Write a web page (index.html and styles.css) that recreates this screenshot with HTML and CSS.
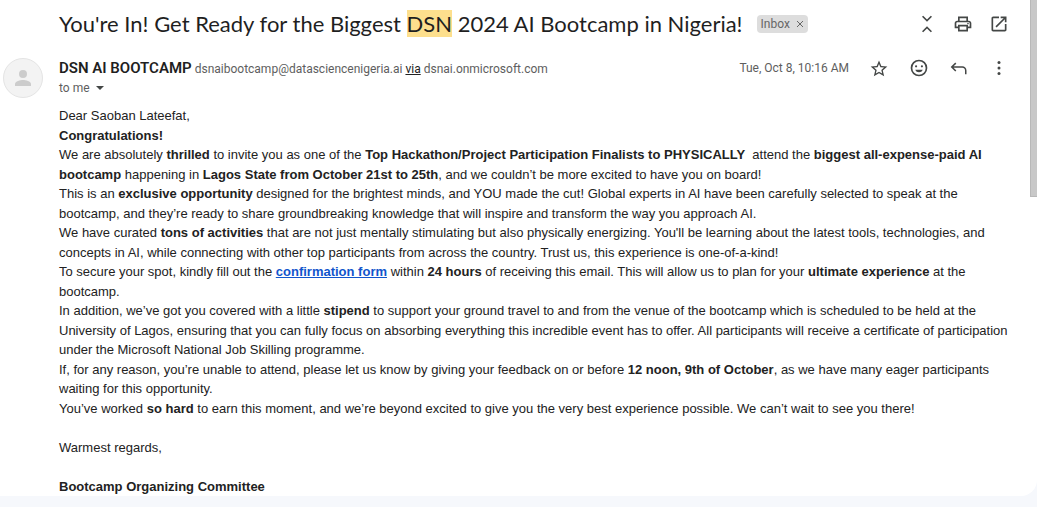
FILE: index.html
```html
<!DOCTYPE html>
<html lang="en">
<head>
  <meta charset="UTF-8">
  <meta name="viewport" content="width=device-width, initial-scale=1.0">
  <title>Mail</title>
  <link rel="stylesheet" href="styles.css">
</head>
<body>
  <main class="mail">
    <header class="subject">
      <h1 class="subject-text">You're In! Get Ready for the Biggest <mark>DSN</mark> 2024 AI Bootcamp in Nigeria!</h1>
      <div class="label">Inbox <button class="label-close" aria-label="Remove label"><svg viewBox="0 0 8 8"><path d="M1 1l6 6M7 1L1 7"/></svg></button></div>
      <div class="subject-actions">
        <button class="icon" aria-label="Collapse all"><svg viewBox="0 0 24 24"><path d="M6 20.600l1.400 1.400 4.600-4.600 4.600 4.600 1.400-1.400-6-6-6 6zM18 3.400l-1.400-1.400L12 6.600 7.400 2 6 3.400l6 6 6-6z"/></svg></button>
        <button class="icon" aria-label="Print"><svg viewBox="0 0 24 24"><path d="M19 8h-1V3H6v5H5c-1.660 0-3 1.340-3 3v6h4v4h12v-4h4v-6c0-1.660-1.340-3-3-3zM8 5h8v3H8V5zm8 14H8v-4h8v4zm2-4v-2H6v2H4v-4c0-.55.45-1 1-1h14c.55 0 1 .45 1 1v4h-2z"/><circle cx="18" cy="11.500" r="1"/></svg></button>
        <button class="icon" aria-label="Open in new window"><svg viewBox="0 0 24 24"><path d="M19 19H5V5h7V3H5c-1.110 0-2 .9-2 2v14c0 1.100.89 2 2 2h14c1.100 0 2-.9 2-2v-7h-2v7zM14 3v2h3.590l-9.830 9.830 1.410 1.410L19 6.410V10h2V3h-7z"/></svg></button>
      </div>
    </header>

    <section class="message">
      <div class="avatar">
        <svg viewBox="0 0 24 24"><circle cx="12" cy="8" r="4"/><path d="M12 14c-2.700 0-8 1.300-8 4v2h16v-2c0-2.700-5.300-4-8-4z"/></svg>
      </div>
      <div class="content">
        <div class="sender">
          <div class="from"><span class="name">DSN AI BOOTCAMP</span> dsnaibootcamp@datasciencenigeria.ai <a class="via" href="#">via</a> dsnai.onmicrosoft.com</div>
          <div class="date">Tue, Oct 8, 10:16 AM</div>
          <div class="message-actions">
            <button class="icon" aria-label="Star"><svg viewBox="0 0 24 24"><path d="M22 10.240l-7.190-.62L12 3 9.190 9.630 2 10.240l5.460 4.730L5.820 22 12 18.270 18.180 22l-1.630-7.030L22 10.240zM12 16.400l-3.760 2.270 1-4.280-3.320-2.880 4.380-.38L12 7.100l1.710 4.040 4.380.38-3.320 2.880 1 4.280L12 16.400z"/></svg></button>
            <button class="icon" aria-label="Add reaction"><svg viewBox="0 0 24 24"><path d="M12 2a10 10 0 1 0 0 20 10 10 0 0 0 0-20zm0 18a8 8 0 1 1 0-16 8 8 0 0 1 0 16zM7.500 14h9c-.7 2-2.400 3-4.500 3s-3.800-1-4.500-3z"/><circle cx="8.500" cy="10" r="1.300"/><circle cx="15.500" cy="10" r="1.300"/></svg></button>
            <button class="icon" aria-label="Reply"><svg viewBox="0 0 24 24"><path d="M7.500 5.500l1.300 1.300L5.500 10H16c2.800 0 5 2.200 5 5v4.500h-1.800V15c0-1.800-1.400-3.200-3.200-3.200H5.500l3.300 3.200-1.300 1.300L2 10.900 7.500 5.500z"/></svg></button>
            <button class="icon" aria-label="More"><svg viewBox="0 0 24 24"><circle cx="12" cy="5.500" r="1.800"/><circle cx="12" cy="12" r="1.800"/><circle cx="12" cy="18.500" r="1.800"/></svg></button>
          </div>
        </div>
        <div class="to">to me <button class="details" aria-label="Show details"></button></div>

        <div class="body">
          <p>Dear Saoban Lateefat,</p>
          <p><b>Congratulations!</b></p>
          <p>We are absolutely <b>thrilled</b> to invite you as one of the <b>Top Hackathon/Project Participation Finalists to PHYSICALLY&nbsp;</b> attend the <b>biggest all-expense-paid AI bootcamp</b> happening in <b>Lagos State from October 21st to 25th</b>, and we couldn’t be more excited to have you on board!</p>
          <p>This is an <b>exclusive opportunity</b> designed for the brightest minds, and YOU made the cut! Global experts in AI have been carefully selected to speak at the bootcamp, and they’re ready to share groundbreaking knowledge that will inspire and transform the way you approach AI.</p>
          <p>We have curated <b>tons of activities</b> that are not just mentally stimulating but also physically energizing. You'll be learning about the latest tools, technologies, and concepts in AI, while connecting with other top participants from across the country. Trust us, this experience is one-of-a-kind!</p>
          <p>To secure your spot, kindly fill out the <a class="form-link" href="#">confirmation form</a> within <b>24 hours</b> of receiving this email. This will allow us to plan for your <b>ultimate experience</b> at the bootcamp.</p>
          <p>In addition, we’ve got you covered with a little <b>stipend</b> to support your ground travel to and from the venue of the bootcamp which is scheduled to be held at the University of Lagos, ensuring that you can fully focus on absorbing everything this incredible event has to offer. All participants will receive a certificate of participation under the Microsoft National Job Skilling programme.</p>
          <p>If, for any reason, you’re unable to attend, please let us know by giving your feedback on or before <b>12 noon, 9th of October</b>, as we have many eager participants waiting for this opportunity.</p>
          <p>You’ve worked <b>so hard</b> to earn this moment, and we’re beyond excited to give you the very best experience possible. We can’t wait to see you there!</p>
          <br>
          <p>Warmest regards,</p>
          <br>
          <p><b>Bootcamp Organizing Committee</b></p>
        </div>
      </div>
    </section>
    <div class="scrollbar"></div>
  </main>
</body>
</html>
```
FILE: styles.css
```css
* {
  box-sizing: border-box;
}
body {
  margin: 0;
  background: #f6f8fc;
  color: #222;
  font-family: "Liberation Sans", Arial, sans-serif;
  font-size: 13px;
}
button {
  padding: 0;
  border: none;
  background: none;
  cursor: pointer;
}
svg {
  display: block;
}
.mail {
  position: relative;
  background: #fff;
  border-radius: 0 0 16px 0;
}

/* subject line */
.subject {
  display: flex;
  align-items: center;
  height: 48px;
  padding: 0 28px 0 59px;
}
.subject-text {
  margin: 0;
  padding-bottom: 2px;
  color: #1f1f1f;
  font-family: Lato, sans-serif;
  font-size: 22px;
  font-weight: 400;
  line-height: 27px;
  white-space: nowrap;
}
mark {
  display: inline-block;
  background: #fddf8d;
  color: inherit;
}
.label {
  display: flex;
  align-items: center;
  gap: 6px;
  height: 18px;
  margin-left: 14px;
  padding: 0 4px;
  border-radius: 4px;
  background: #ddd;
  color: #666;
  font-family: Roboto, sans-serif;
  font-size: 12px;
}
.label-close svg {
  width: 8px;
  height: 8px;
  fill: none;
  stroke: #666;
}
.subject-actions,
.message-actions {
  display: flex;
}
.subject-actions {
  gap: 16px;
  margin-left: auto;
}
.message-actions {
  gap: 20px;
  margin-left: 20px;
}
.icon svg {
  width: 20px;
  height: 20px;
  fill: #444746;
}

/* message */
.message {
  display: flex;
  padding: 10px 23px 0 3px;
}
.avatar {
  display: flex;
  flex: none;
  align-items: center;
  justify-content: center;
  width: 40px;
  height: 40px;
  margin-right: 16px;
  border: 1px solid #e4e4e4;
  border-radius: 50%;
  background: #f3f3f3;
}
.avatar svg {
  width: 24px;
  height: 24px;
  fill: #ccc;
}
.content {
  flex: 1;
}
.sender {
  display: flex;
  align-items: center;
  height: 20px;
  padding-right: 5px;
  color: #5e5e5e;
  font-family: Roboto, sans-serif;
  font-size: 12px;
}
.name {
  color: #1f1f1f;
  font-size: 15px;
  font-weight: 600;
}
.via {
  color: #222;
}
.date {
  margin-left: auto;
}
.to {
  display: flex;
  align-items: center;
  gap: 6px;
  height: 20px;
  color: #5e5e5e;
  font-family: Roboto, sans-serif;
  font-size: 12px;
}
.details {
  border-top: 4px solid #444746;
  border-left: 4px solid transparent;
  border-right: 4px solid transparent;
}
.body {
  padding-top: 8px;
  line-height: 1.5;
}
.body p {
  margin: 0;
}
.form-link {
  color: #15c;
  font-weight: bold;
}

.scrollbar {
  position: absolute;
  top: 0;
  right: 0;
  width: 7px;
  height: 197px;
  border: 1px solid #b8b8b8;
  border-width: 0 0 1px 1px;
  background: #c8c8c8;
}
```
